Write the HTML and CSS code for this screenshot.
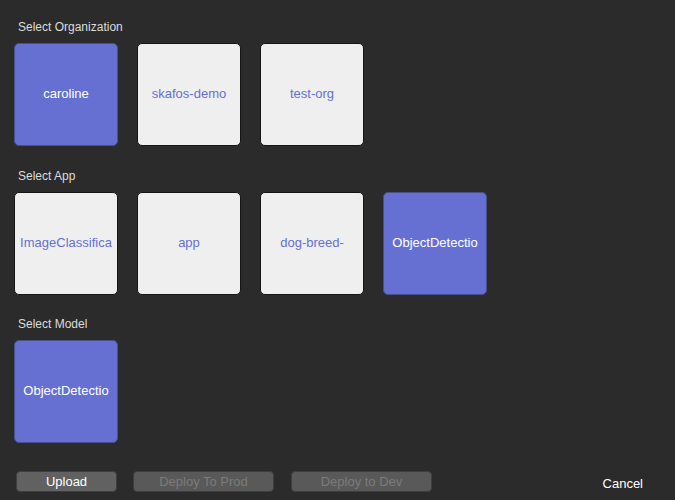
FILE: index.html
```html
<!DOCTYPE html>
<html>
<head>
<meta charset="utf-8">
<link rel="stylesheet" href="styles.css">
</head>
<body>
<div class="panel">
  <section class="section section-first">
    <div class="label">Select Organization</div>
    <div class="tiles">
      <div class="tile selected">caroline</div>
      <div class="tile">skafos-demo</div>
      <div class="tile">test-org</div>
    </div>
  </section>
  <section class="section">
    <div class="label">Select App</div>
    <div class="tiles">
      <div class="tile">ImageClassifica</div>
      <div class="tile">app</div>
      <div class="tile">dog-breed-</div>
      <div class="tile selected">ObjectDetectio</div>
    </div>
  </section>
  <section class="section section-last">
    <div class="label">Select Model</div>
    <div class="tiles">
      <div class="tile selected">ObjectDetectio</div>
    </div>
  </section>
  <div class="actions">
    <button class="btn btn-upload">Upload</button>
    <button class="btn btn-wide" disabled>Deploy To Prod</button>
    <button class="btn btn-wide" disabled>Deploy to Dev</button>
    <button class="cancel">Cancel</button>
  </div>
</div>
</body>
</html>
```

FILE: styles.css
```css
html, body {
  margin: 0;
  padding: 0;
  background: #2b2b2b;
  font-family: "Liberation Sans", Arial, sans-serif;
  -webkit-font-smoothing: antialiased;
}

.panel {
  width: 675px;
  height: 500px;
  box-sizing: border-box;
  padding: 19px 0 0 14px;
  display: flex;
  flex-direction: column;
}

.section {
  flex: none;
  display: flex;
  flex-direction: column;
  margin-bottom: 21px;
}

.section-first {
  margin-bottom: 22px;
}

.section-last {
  margin-bottom: 28px;
}

.label {
  font-size: 12px;
  line-height: 16px;
  height: 16px;
  color: #dcdcdc;
  padding-left: 4px;
  margin-bottom: 8px;
}

.tiles {
  display: flex;
  gap: 19px;
}

.tile {
  flex: none;
  width: 104px;
  height: 103px;
  box-sizing: border-box;
  border-radius: 5px;
  background: #efefef;
  border: 1px solid #151515;
  color: #6670d3;
  font-size: 13px;
  display: flex;
  align-items: center;
  justify-content: center;
  white-space: nowrap;
  overflow: hidden;
  padding-bottom: 2px;
}

.tile.selected {
  background: #6670d3;
  border-color: #4a4f8a;
  color: #ffffff;
}

.actions {
  flex: none;
  display: flex;
  align-items: center;
  padding-left: 2px;
}

.btn {
  flex: none;
  height: 21px;
  box-sizing: border-box;
  border: 1px solid #3e3e3e;
  border-radius: 4px;
  background: #616161;
  color: #ffffff;
  font-family: "Liberation Sans", Arial, sans-serif;
  font-size: 13px;
  padding: 0;
  margin: 0 16px 0 0;
}

.btn-upload {
  width: 101px;
}

.btn-wide {
  width: 141px;
  background: #595959;
  color: #7b7b7b;
}

.btn-wide + .btn-wide {
  margin-left: 1px;
}

.cancel {
  margin: 3px 32px 0 auto;
  background: none;
  border: none;
  color: #ffffff;
  font-family: "Liberation Sans", Arial, sans-serif;
  font-size: 13px;
  padding: 0;
}
```
